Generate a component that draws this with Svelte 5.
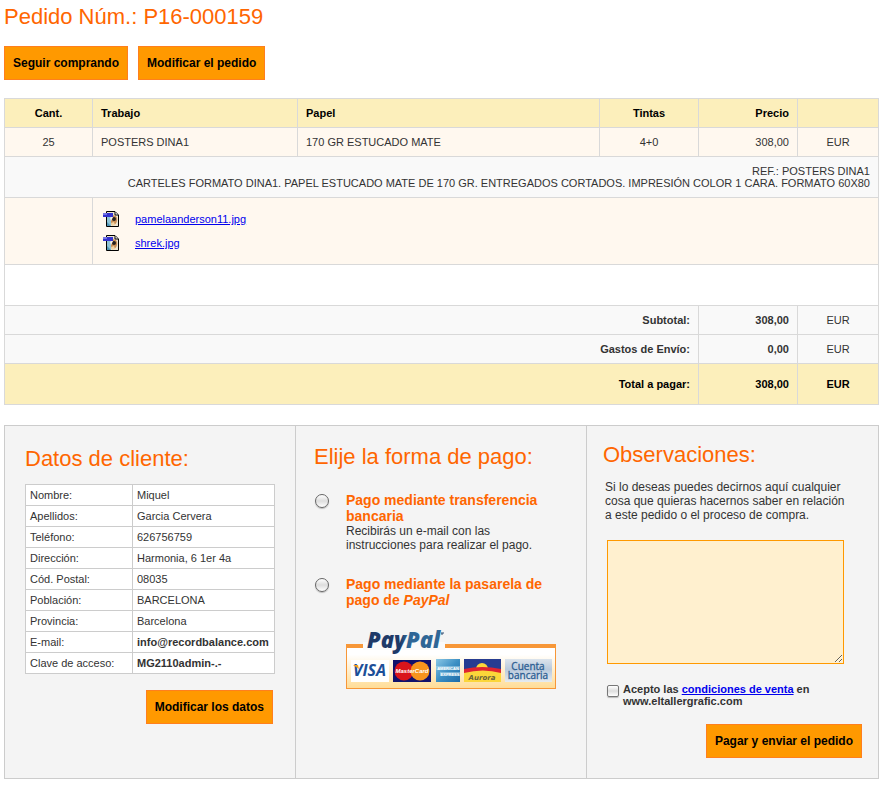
<script>
  const order = {
    number: 'P16-000159',
    qty: 25,
    job: 'POSTERS DINA1',
    paper: '170 GR ESTUCADO MATE',
    inks: '4+0',
    price: '308,00',
    ref: 'REF.: POSTERS DINA1',
    description: 'CARTELES FORMATO DINA1. PAPEL ESTUCADO MATE DE 170 GR. ENTREGADOS CORTADOS. IMPRESIÓN COLOR 1 CARA. FORMATO 60X80'
  };

  const files = ['pamelaanderson11.jpg', 'shrek.jpg'];

  const totals = [
    { label: 'Subtotal:', amount: '308,00' },
    { label: 'Gastos de Envío:', amount: '0,00' },
    { label: 'Total a pagar:', amount: '308,00', final: true }
  ];

  const customer = [
    { label: 'Nombre:', value: 'Miquel' },
    { label: 'Apellidos:', value: 'Garcia Cervera' },
    { label: 'Teléfono:', value: '626756759' },
    { label: 'Dirección:', value: 'Harmonia, 6 1er 4a' },
    { label: 'Cód. Postal:', value: '08035' },
    { label: 'Población:', value: 'BARCELONA' },
    { label: 'Provincia:', value: 'Barcelona' },
    { label: 'E-mail:', value: 'info@recordbalance.com', strong: true },
    { label: 'Clave de acceso:', value: 'MG2110admin-.-', strong: true }
  ];

  let payment = '';
  let notes = '';
  let accepted = false;
</script>

<main class="page">
  <h1>Pedido Núm.: {order.number}</h1>

  <div class="actions">
    <button type="button" class="btn">Seguir comprando</button>
    <button type="button" class="btn">Modificar el pedido</button>
  </div>

  <table class="order">
    <colgroup>
      <col class="c-qty" />
      <col class="c-job" />
      <col />
      <col class="c-inks" />
      <col class="c-price" />
      <col class="c-cur" />
    </colgroup>
    <thead>
      <tr>
        <th class="center">Cant.</th>
        <th>Trabajo</th>
        <th>Papel</th>
        <th class="center">Tintas</th>
        <th class="right">Precio</th>
        <th></th>
      </tr>
    </thead>
    <tbody>
      <tr class="cream">
        <td class="center">{order.qty}</td>
        <td>{order.job}</td>
        <td>{order.paper}</td>
        <td class="center">{order.inks}</td>
        <td class="right">{order.price}</td>
        <td class="center">EUR</td>
      </tr>
      <tr class="grey">
        <td colspan="6" class="right">{order.ref}<br />{order.description}</td>
      </tr>
      <tr class="cream">
        <td></td>
        <td colspan="5" class="files">
          {#each files as file}
            <div class="file">
              <svg width="16" height="16" viewBox="0 0 16 16" aria-hidden="true">
                <path d="M3.500 .5H12L15.500 4v11.500h-12z" fill="#eee6d2" stroke="#000" />
                <path d="M4 5h4v10H4z" fill="#8fc4d8" />
                <path d="M4 11l4 4H4z" fill="#4f95b5" />
                <path d="M8 5c4-2 7 1 6 5s-4 5-6 3z" fill="#c98f57" />
                <path d="M8 12l3-1 1 3-3 1z" fill="#efd3a4" />
                <circle cx="11" cy="8" r="2" fill="#23201f" />
                <path d="M7 7l2-2 1 1-2 4z" fill="#f6f3ea" />
                <path d="M12 1v3h3" fill="#fff" stroke="#000" />
                <path d="M0 2h10v4H0z" fill="#3433cf" />
                <path d="M0 2h4v2H0z" fill="#7474e4" />
              </svg>
              <a href="#{file}">{file}</a>
            </div>
          {/each}
        </td>
      </tr>
      <tr class="spacer">
        <td colspan="6"></td>
      </tr>
      {#each totals as row}
        <tr class={row.final ? 'total' : 'grey'}>
          <th colspan="4" class="right">{row.label}</th>
          <td class="right strong">{row.amount}</td>
          <td class="center">EUR</td>
        </tr>
      {/each}
    </tbody>
  </table>

  <div class="panels">
    <section class="panel client">
      <h2>Datos de cliente:</h2>
      <table class="data">
        <tbody>
          {#each customer as row}
            <tr>
              <th>{row.label}</th>
              <td class:strong={row.strong}>{row.value}</td>
            </tr>
          {/each}
        </tbody>
      </table>
      <div class="panel-foot">
        <button type="button" class="btn">Modificar los datos</button>
      </div>
    </section>

    <section class="panel payment">
      <h2>Elije la forma de pago:</h2>
      <div class="option">
        <input type="radio" id="pay-bank" name="payment" value="bank" bind:group={payment} />
        <label for="pay-bank">
          <strong>Pago mediante transferencia bancaria</strong>
          <span>Recibirás un e-mail con las instrucciones para realizar el pago.</span>
        </label>
      </div>
      <div class="option">
        <input type="radio" id="pay-paypal" name="payment" value="paypal" bind:group={payment} />
        <label for="pay-paypal">
          <strong>Pago mediante la pasarela de pago de <em>PayPal</em></strong>
        </label>
      </div>

      <svg class="cards" width="210" height="66" viewBox="0 -6 210 66" role="img" aria-label="Tarjetas aceptadas por PayPal">
        <defs>
          <linearGradient id="boxFill" x1="0" y1="0" x2="0" y2="1">
            <stop offset="0.200" stop-color="#fff" />
            <stop offset="1" stop-color="#ffdc95" />
          </linearGradient>
          <linearGradient id="amexFill" x1="0" y1="0" x2="1" y2="1">
            <stop offset="0" stop-color="#8cc8e6" />
            <stop offset="0.500" stop-color="#3c8fc4" />
            <stop offset="1" stop-color="#1c6ba8" />
          </linearGradient>
          <linearGradient id="bankFill" x1="0" y1="0" x2="0" y2="1">
            <stop offset="0" stop-color="#dbe3ec" />
            <stop offset="0.450" stop-color="#b9c9dc" />
            <stop offset="1" stop-color="#e6ebf0" />
          </linearGradient>
          <linearGradient id="logoFill" x1="0" y1="0" x2="1" y2="0">
            <stop offset="0.450" stop-color="#1f3a68" />
            <stop offset="0.550" stop-color="#2f6696" />
          </linearGradient>
        </defs>
        <!-- frame -->
        <rect x="0.500" y="16" width="209" height="42.500" fill="url(#boxFill)" stroke="#f79738" />
        <path d="M0 14h210v4H0z" fill="#f79738" />
        <path d="M17 12h82v8H17z" fill="#fafafa" />
        <text x="21" y="18" class="logo" fill="url(#logoFill)">PayPal</text>
        <path d="M95 3h3M96 3v2" stroke="#2f4d70" />
        <!-- visa -->
        <path d="M5 30h38v22H5z" fill="#fff" />
        <text x="7" y="46" class="visa">VISA</text>
        <path d="M7 35h5l1 4z" fill="#f3a01d" />
        <!-- mastercard -->
        <path d="M47 30h38v22H47z" fill="#11116b" />
        <circle cx="58" cy="41" r="9.500" fill="#d9151b" />
        <circle cx="74" cy="41" r="9.500" fill="#f7941d" />
        <text x="66" y="43" class="master">MasterCard</text>
        <!-- amex -->
        <path d="M90 29h24v23H90z" fill="url(#amexFill)" />
        <path d="M90 36h24v4H90zM94 42h20v4H94z" fill="#b5dbed" opacity="0.500" />
        <text x="102" y="40" class="amex">AMERICAN</text>
        <text x="104" y="46" class="amex">EXPRESS</text>
        <!-- aurora -->
        <path d="M118 29h37v23h-37z" fill="#263c91" />
        <path d="M118 42q18-8 37 0v10h-37z" fill="#fbd63a" />
        <circle cx="136" cy="39" r="6" fill="#fbd63a" />
        <path d="M118 39q18-4 37 0v4q-18-5-37 0z" fill="#df2430" />
        <text x="136" y="50" class="aurora">Aurora</text>
        <!-- bank account -->
        <path d="M159 29h47v23h-47z" fill="url(#bankFill)" />
        <text x="182" y="40" class="bank">Cuenta</text>
        <text x="182" y="49" class="bank">bancaria</text>
      </svg>
    </section>

    <section class="panel notes">
      <h2>Observaciones:</h2>
      <label class="hint" for="notes">Si lo deseas puedes decirnos aquí cualquier cosa que quieras hacernos saber en relación a este pedido o el proceso de compra.</label>
      <textarea id="notes" bind:value={notes}></textarea>
      <div class="terms">
        <input type="checkbox" id="terms" bind:checked={accepted} />
        <label for="terms">Acepto las <a href="#condiciones">condiciones de venta</a> en www.eltallergrafic.com</label>
      </div>
      <div class="panel-foot">
        <button type="button" class="btn">Pagar y enviar el pedido</button>
      </div>
    </section>
  </div>
</main>

<style>
  :global(body) { background: #fff; }

  .page {
    padding: 0 4px 9px;
    font-family: Arial, "Liberation Sans", sans-serif;
    font-size: 11px;
    line-height: 12px;
    color: #333;
  }

  h1, h2 {
    margin: 0;
    font-size: 22px;
    line-height: 34px;
    font-weight: 400;
    color: #f60;
  }

  a { color: #00e; }

  .actions { display: flex; gap: 10px; margin: 12px 0 18px; }

  .btn {
    height: 34px;
    padding: 0 8px;
    border: 1px solid #ff7f1e;
    background: #f90;
    color: #000;
    font: bold 12px Arial, "Liberation Sans", sans-serif;
    cursor: pointer;
  }

  /* order table */
  table { border-collapse: collapse; }
  .order { width: 100%; table-layout: fixed; }
  .c-qty { width: 88px; }
  .c-job { width: 205px; }
  .c-inks, .c-price { width: 99px; }
  .c-cur { width: 81px; }

  .order th, .order td {
    padding: 8px;
    border: 1px solid #d9d9d9;
    text-align: left;
  }
  .order thead th { background: #fcefbb; color: #000; }
  .order .center { text-align: center; }
  .order .right { text-align: right; }
  .strong { font-weight: 700; }
  .cream { background: #fff8ef; }
  .grey { background: #f9f9f9; }
  .spacer td { height: 24px; }
  .total { background: #fcefbb; color: #000; font-weight: 700; }
  .order .total th, .order .total td { padding: 14px 8px; }

  .order .files { padding: 9px 10px; }
  .file { display: flex; align-items: center; gap: 16px; height: 24px; }

  /* bottom panels */
  .panels {
    display: grid;
    grid-template-columns: 290fr 291fr 292fr;
    margin-top: 20px;
    border: 1px solid #ccc;
    background: #f4f4f4;
  }
  .panel + .panel { border-left: 1px solid #ccc; }
  .panel-foot { display: flex; justify-content: flex-end; }

  .client { padding: 16px 20px; }
  .client .panel-foot { margin: 16px 2px 0; }
  .data { width: 100%; margin-top: 8px; background: #fff; }
  .data th, .data td {
    padding: 4px;
    border: 1px solid #ccc;
    text-align: left;
    white-space: nowrap;
  }
  .data th { width: 98px; font-weight: 400; }

  .payment { padding: 14px 18px; }
  .option {
    display: flex;
    align-items: flex-start;
    gap: 17px;
    margin-top: 24px;
  }
  h2 + .option { margin-top: 18px; }
  .option label { flex: 1; padding-right: 16px; font-size: 12px; line-height: 14px; }
  .option strong { display: block; font-size: 14px; line-height: 16px; color: #f60; }

  input { appearance: none; flex: none; margin: 0; }
  .option input {
    width: 14px;
    height: 14px;
    margin: 2px 0 0 1px;
    border: 1px solid #666;
    border-radius: 50%;
    background: linear-gradient(#fff, #ddd 50%, #fff);
    box-shadow: 0 1px 1px #bbb;
  }
  .option input:checked { background: radial-gradient(#333 30%, #eee 40%); }

  .cards { display: block; margin: 16px 0 0 32px; }
  .logo { font: italic 800 22px "Open Sans", sans-serif; }
  .visa { font: italic bold 16px "Open Sans", sans-serif; fill: #1c4f98; }
  .master { font: italic bold 6px "Liberation Sans", sans-serif; fill: #fff; text-anchor: middle; }
  .amex { font: bold 4px "Liberation Sans", sans-serif; fill: #fff; text-anchor: middle; }
  .aurora { font: italic bold 7px "DejaVu Sans", sans-serif; fill: #6b6438; text-anchor: middle; }
  .bank { font: 10px "Open Sans", sans-serif; fill: #2c5e92; stroke: #2c5e92; stroke-width: 0.300; text-anchor: middle; }

  .notes { padding: 12px 16px 20px; }
  .hint { display: block; margin: 8px 8px 18px 2px; font-size: 12px; line-height: 14px; }
  textarea {
    display: block;
    box-sizing: border-box;
    width: calc(100% - 22px);
    height: 124px;
    margin: 0 18px 0 4px;
    padding: 4px;
    border: 1px solid #f90;
    background: #fff0cf;
    font: inherit;
  }
  .terms {
    display: flex;
    align-items: flex-start;
    gap: 4px;
    margin: 19px 0 17px 4px;
    font-weight: 700;
  }
  .terms label { max-width: 200px; }
  .terms input {
    width: 12px;
    height: 12px;
    margin-top: 2px;
    border: 1px solid #777;
    border-radius: 2px;
    background: linear-gradient(#fff, #ddd 50%, #fff);
    box-shadow: 0 1px 1px #bbb;
  }
  .terms input:checked { background: #555; }
</style>
